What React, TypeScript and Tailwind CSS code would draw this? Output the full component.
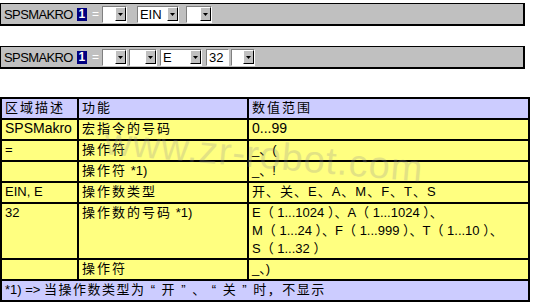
import React from "react";

const font = { fontFamily: '"Liberation Sans", Arial, "Noto Sans CJK SC", sans-serif' };

// small win-style dropdown arrow button
function ArrowBtn() {
  return (
    <div className="flex h-[14px] w-[11px] items-center justify-center border border-t-white border-l-white border-r-black border-b-black bg-[#c0c0c0]">
      <svg width="5" height="3" viewBox="0 0 5 3">
        <path d="M0 0h5L2.5 3z" fill="#000" />
      </svg>
    </div>
  );
}

function Combo({ value = "", field }: { value?: string; field: string }) {
  return (
    <div className="flex h-[17px] items-center border border-t-[#808080] border-l-[#808080] border-r-white border-b-white bg-white">
      <div className={`${field} pl-[2px] text-[13px] leading-none text-black`}>{value}</div>
      <ArrowBtn />
    </div>
  );
}

function Field({ value, field }: { value: string; field: string }) {
  return (
    <div
      className={`${field} flex h-[17px] items-center border border-t-[#808080] border-l-[#808080] border-r-white border-b-white bg-white pl-[2px] text-[13px] leading-none text-black`}
    >
      {value}
    </div>
  );
}

function MacroBar({ children }: { children: React.ReactNode }) {
  return (
    <div className="flex h-[23px] w-[525px] items-center border border-black border-r-2 border-b-2 bg-[#c0c0c0] pl-[3px]">
      <span className="text-[13px] leading-none tracking-[-0.6px] text-black">SPSMAKRO</span>
      <span className="ml-[4px] flex h-[13px] w-[10px] items-center justify-center bg-[#000080] text-[12px] font-bold leading-none text-white">
        1
      </span>
      <span className="ml-[5px] text-[12px] leading-none text-white">=</span>
      {children}
    </div>
  );
}

const cell = "border-2 border-black px-[3px] align-top";

export default function App() {
  return (
    <div className="relative h-[306px] w-[544px] overflow-hidden bg-white" style={font}>
      <div className="pt-[3px]">
        <MacroBar>
          <div className="ml-[3px]">
            <Combo field="w-[12px]" />
          </div>
          <div className="ml-[10px]">
            <Combo field="w-[29px]" value="EIN" />
          </div>
          <div className="ml-[7px]">
            <Combo field="w-[13px]" />
          </div>
        </MacroBar>
      </div>

      <div className="pt-[20px]">
        <MacroBar>
          <div className="ml-[3px]">
            <Combo field="w-[12px]" />
          </div>
          <div className="ml-[2px]">
            <Combo field="w-[15px]" />
          </div>
          <div className="ml-[3px]">
            <Combo field="w-[29px]" value="E" />
          </div>
          <div className="ml-[4px]">
            <Field field="w-[23px]" value="32" />
          </div>
          <div className="ml-[2px]">
            <Combo field="w-[11px]" />
          </div>
        </MacroBar>
      </div>

      <table className="mt-[28px] w-[530px] table-fixed border-collapse border-2 border-black text-[13px] leading-[17px] text-black">
        <colgroup>
          <col className="w-[77px]" />
          <col className="w-[170px]" />
          <col />
        </colgroup>
        <tbody>
          <tr className="h-[21px] bg-[#ccccff] tracking-[2px]">
            <td className={cell}>区域描述</td>
            <td className={cell}>功能</td>
            <td className={cell}>数值范围</td>
          </tr>
          <tr className="h-[21px] bg-[#ffff80]">
            <td className={`${cell} text-[14px]`}>SPSMakro</td>
            <td className={`${cell} tracking-[2px]`}>宏指令的号码</td>
            <td className={`${cell} text-[14px]`}>0...99</td>
          </tr>
          <tr className="h-[21px] bg-[#ffff80]">
            <td className={cell}>=</td>
            <td className={`${cell} tracking-[2px]`}>操作符</td>
            <td className={cell}>_、(</td>
          </tr>
          <tr className="h-[21px] bg-[#ffff80]">
            <td className={cell}></td>
            <td className={`${cell} tracking-[2px]`}>
              操作符<span className="tracking-normal"> *1)</span>
            </td>
            <td className={cell}>_、!</td>
          </tr>
          <tr className="h-[21px] bg-[#ffff80]">
            <td className={cell}>EIN, E</td>
            <td className={`${cell} tracking-[2px]`}>操作数类型</td>
            <td className={`${cell} tracking-[1px]`}>开、关、E、A、M、F、T、S</td>
          </tr>
          <tr className="h-[55px] bg-[#ffff80]">
            <td className={cell}>32</td>
            <td className={`${cell} tracking-[2px]`}>
              操作数的号码<span className="tracking-normal"> *1)</span>
            </td>
            <td className={`${cell} leading-[18px]`}>
              E（ 1...1024 ）、A（ 1...1024 ）、
              <br />
              M（ 1...24 ）、F（ 1...999 ）、T（ 1...10 ）、
              <br />
              S（ 1...32 ）
            </td>
          </tr>
          <tr className="h-[21px] bg-[#ffff80]">
            <td className={cell}></td>
            <td className={`${cell} tracking-[2px]`}>操作符</td>
            <td className={cell}>_、)</td>
          </tr>
          <tr className="h-[21px] bg-[#ccccff]">
            <td className={cell} colSpan={3}>
              *1) =&gt; <span className="tracking-[1.5px]">当操作数类型为 “ 开 ” 、 “ 关 ” 时，不显示</span>
            </td>
          </tr>
        </tbody>
      </table>

      {/* faint site watermark over the table */}
      <div className="pointer-events-none absolute left-[104px] top-[136px] rotate-[5deg] text-[38px] leading-none tracking-[1px] text-[#909090] opacity-25">
        www.zr-robot.com
      </div>
    </div>
  );
}
